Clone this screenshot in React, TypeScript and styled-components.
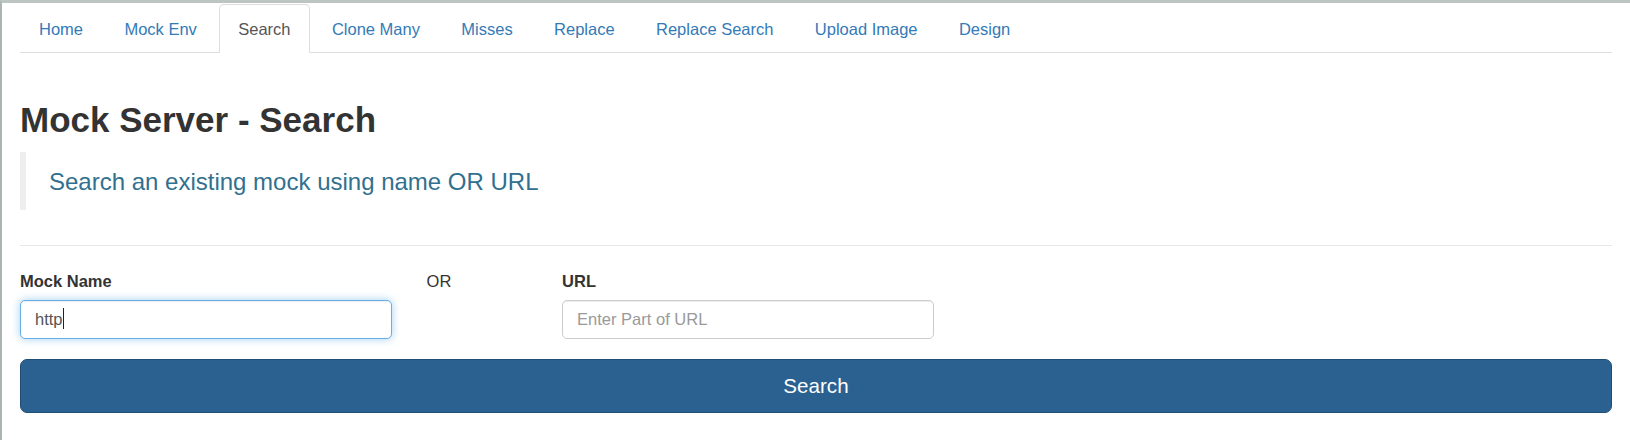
import React from "react";
import styled, { createGlobalStyle, css } from "styled-components";

const GlobalStyle = createGlobalStyle`
  html, body {
    margin: 0;
    padding: 0;
    background: #ffffff;
  }
  body {
    font-family: "Liberation Sans", Arial, Helvetica, sans-serif;
    font-size: 16.5px;
    color: #333333;
  }
  * { box-sizing: border-box; }
`;

const Frame = styled.div`
  min-height: 440px;
  border-top: 3px solid #bcc5c1;
  border-left: 2px solid #aab4b0;
  padding: 1px 18px 0 18px;
`;

const Tabs = styled.ul`
  display: flex;
  list-style: none;
  margin: 0;
  padding: 0;
  border-bottom: 1px solid #dddddd;
`;

const TabItem = styled.li`
  margin: 0 3.4px -1px 0;
`;

const TabLink = styled.a<{ $active?: boolean }>`
  display: block;
  padding: 11.5px 18px;
  line-height: 24px;
  font-size: 16.5px;
  color: #337ab7;
  text-decoration: none;
  border: 1px solid transparent;
  border-radius: 5px 5px 0 0;
  cursor: pointer;
  ${(p) =>
    p.$active &&
    css`
      color: #555555;
      background: #ffffff;
      border-color: #dddddd #dddddd transparent;
    `}
`;

const Title = styled.h1`
  margin: 48px 0 12.5px;
  font-size: 35px;
  font-weight: bold;
  line-height: 38.5px;
  color: #333333;
`;

const Quote = styled.blockquote`
  margin: 0;
  padding: 13px 23px 11px;
  border-left: 6px solid #eeeeee;
`;

const Lead = styled.p`
  margin: 0;
  font-size: 24px;
  line-height: 34px;
  color: #31708f;
`;

const Rule = styled.hr`
  margin: 35px 0 24px;
  border: 0;
  border-top: 1px solid #e8e8e8;
`;

const FormRow = styled.div`
  display: grid;
  grid-template-columns: repeat(12, 1fr);
  column-gap: 34.3px;
`;

const Field = styled.div<{ $span: number }>`
  grid-column: span ${(p) => p.$span};
  display: flex;
  flex-direction: column;
`;

const Label = styled.label`
  display: block;
  font-weight: bold;
  font-size: 16.5px;
  line-height: 23px;
  margin-bottom: 7px;
  color: #333333;
`;

const OrText = styled.div`
  font-size: 16.5px;
  line-height: 23px;
  color: #333333;
`;

const InputWrap = styled.div`
  position: relative;
`;

const TextInput = styled.input<{ $focused?: boolean }>`
  display: block;
  width: 100%;
  height: 39px;
  padding: 0 14px;
  font-family: "Liberation Sans", Arial, Helvetica, sans-serif;
  font-size: 16.5px;
  color: #555555;
  background: #ffffff;
  border: 1px solid #cccccc;
  border-radius: 5px;
  box-shadow: inset 0 1px 1px rgba(0, 0, 0, 0.075);
  outline: none;
  &::placeholder {
    color: #999999;
  }
  ${(p) =>
    p.$focused &&
    css`
      border-color: #66afe9;
      box-shadow: inset 0 1px 1px rgba(0, 0, 0, 0.075),
        0 0 8px rgba(102, 175, 233, 0.6);
    `}
`;

const Caret = styled.span`
  position: absolute;
  left: 43px;
  top: 8px;
  width: 1px;
  height: 21px;
  background: #222222;
`;

const SubmitButton = styled.button`
  display: block;
  width: 100%;
  height: 54px;
  margin-top: 20px;
  font-family: "Liberation Sans", Arial, Helvetica, sans-serif;
  font-size: 20.6px;
  color: #ffffff;
  background: #2b6190;
  border: 1px solid #204d74;
  border-radius: 7px;
  cursor: pointer;
`;

const tabs = [
  "Home",
  "Mock Env",
  "Search",
  "Clone Many",
  "Misses",
  "Replace",
  "Replace Search",
  "Upload Image",
  "Design",
];

export default function App() {
  return (
    <>
      <GlobalStyle />
      <Frame>
        <Tabs>
          {tabs.map((t) => (
            <TabItem key={t}>
              <TabLink $active={t === "Search"}>{t}</TabLink>
            </TabItem>
          ))}
        </Tabs>
        <Title>Mock Server - Search</Title>
        <Quote>
          <Lead>Search an existing mock using name OR URL</Lead>
        </Quote>
        <Rule />
        <form onSubmit={(e) => e.preventDefault()}>
          <FormRow>
            <Field $span={3}>
              <Label htmlFor="mockName">Mock Name</Label>
              <InputWrap>
                <TextInput id="mockName" $focused defaultValue="http" />
                <Caret />
              </InputWrap>
            </Field>
            <Field $span={1}>
              <OrText>OR</OrText>
            </Field>
            <Field $span={3}>
              <Label htmlFor="url">URL</Label>
              <TextInput id="url" placeholder="Enter Part of URL" />
            </Field>
          </FormRow>
          <SubmitButton type="submit">Search</SubmitButton>
        </form>
      </Frame>
    </>
  );
}
